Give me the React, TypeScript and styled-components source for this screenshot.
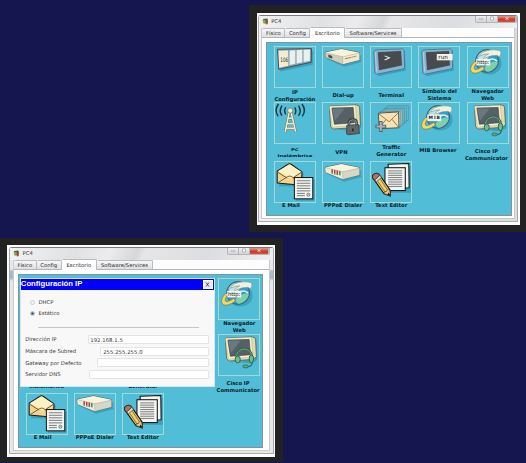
import React from "react";
import styled, { createGlobalStyle } from "styled-components";

const Global = createGlobalStyle`
  html, body { margin: 0; padding: 0; background: #15154f; }
  body { width: 526px; height: 463px; overflow: hidden; }
  * { box-sizing: border-box; }
`;

const Page = styled.main`
  width: 526px;
  height: 463px;
  padding-top: 5px;
  display: flex;
  flex-direction: column;
  gap: 5.7px;
  background: #15154f;
  font-family: "DejaVu Sans", sans-serif;
  font-size: 5.25px;
  color: #2b2b2b;
`;

const Frame = styled.section<{ $w: number; $h: number; $end?: boolean; $pad: string }>`
  align-self: ${(p) => (p.$end ? "flex-end" : "flex-start")};
  width: ${(p) => p.$w}px;
  height: ${(p) => p.$h}px;
  padding: ${(p) => p.$pad};
  background: #222;
  flex: none;
`;

const Card = styled.div`
  height: 100%;
  background: #fff;
  padding: 2px 1.6px 2.6px 1.4px;
`;

const Chrome = styled.div<{ $rail: number }>`
  height: 100%;
  border: 1px solid #a9aaac;
  border-top-color: #77797c;
  border-radius: 3px 3px 1px 1px;
  padding: 0 ${(p) => p.$rail}px 2.6px;
  background: ${(p) =>
    p.$rail > 2
      ? "linear-gradient(#e9e9eb 21px, #a9bccf 23px, #a3b7cc 30px, #e6e7e9 33px)"
      : "linear-gradient(90deg, #f1f1f3, #dcdde0)"};
  display: flex;
  flex-direction: column;
`;

const TitleBar = styled.header<{ $pull: number }>`
  height: 12.3px;
  flex: none;
  margin: 0 ${(p) => -p.$pull}px;
  padding-left: ${(p) => p.$pull + 0.6}px;
  display: flex;
  align-items: flex-start;
  background: linear-gradient(115deg, #f2f2f3 0%, #e0e1e3 25%, #ececee 38%, #d6d7d9 48%, #e6e6e8 51%, #dcdde0 75%, #efeff1 100%);
`;

const TitleText = styled.span`
  margin: 2.4px auto 0 2.2px;
  line-height: 7px;
  color: #333;
`;

const AppIcon = styled.svg`
  width: 7px;
  height: 7px;
  margin-top: 2px;
`;

const Controls = styled.div<{ $edge: number }>`
  display: flex;
  margin-right: ${(p) => p.$edge}px;
  height: 7.3px;
  border: 0.5px solid #b4b6b9;
  border-top: 0;
  border-radius: 0 0 2px 2px;
  overflow: hidden;
`;

const Control = styled.span<{ $close?: boolean }>`
  width: ${(p) => (p.$close ? 18.4 : 11)}px;
  display: flex;
  align-items: center;
  justify-content: center;
  border-right: 0.5px solid #b4b6b9;
  background: ${(p) =>
    p.$close ? "linear-gradient(#e39a8a, #cf5440 45%, #c43522 50%, #d8553d)" : "linear-gradient(#f0f0f2, #d3d4d7)"};
  svg { width: 6px; height: 5px; display: block; }
`;

const Body = styled.div<{ $l: number }>`
  flex: 1;
  min-height: 0;
  background: #fff;
  border: 0.5px solid #c9cacc;
  border-top: 0;
  padding-left: ${(p) => p.$l}px;
`;

const Tabs = styled.nav<{ $pull: number }>`
  display: flex;
  height: 9.7px;
  margin-left: -${(p) => p.$pull}px;
  align-items: flex-end;
  border-bottom: 0.7px solid #b5b6b8;
  background: #fdfdfd;
`;

const Tab = styled.span<{ $w: number; $active?: boolean }>`
  width: ${(p) => p.$w}px;
  height: ${(p) => (p.$active ? 10.7 : 9)}px;
  margin-bottom: ${(p) => (p.$active ? -1 : 0)}px;
  flex: none;
  display: flex;
  align-items: center;
  justify-content: center;
  white-space: nowrap;
  background: ${(p) => (p.$active ? "#fff" : "linear-gradient(#f7f7f8, #dedfe1)")};
  border: 1px solid #bbbcbe;
  border-width: 1px 1px 0 0;
  border-radius: 1.5px 1.5px 0 0;
`;

const Desk = styled.div`
  position: relative;
  width: 245.4px;
  height: 174.4px;
  margin-top: 4.3px;
  padding: 3px 0 0 6.6px;
  border: 1px solid #82949a;
  background: #52bdd6;
`;

const Grid = styled.div`
  display: grid;
  grid-template-columns: repeat(5, 48.2px);
  grid-template-rows: 56px 58.9px 48px;
`;

const Item = styled.div`
  display: flex;
  flex-direction: column;
  width: 42px;
`;

const Tile = styled.svg`
  width: 42px;
  height: 42px;
  flex: none;
  overflow: visible;
  border: 1px solid #a3d9d5;
  display: block;
`;

const Label = styled.div<{ $top: number; $shift?: number; $squat?: boolean }>`
  align-self: center;
  margin-top: ${(p) => p.$top}px;
  margin-left: ${(p) => (p.$shift ?? 0) * 2}px;
  width: 60px;
  flex: none;
  text-align: center;
  font-weight: 700;
  line-height: ${(p) => (p.$squat ? 5.2 : 6.8)}px;
  white-space: nowrap;
  color: #07222a;
  span { display: block; ${(p) => p.$squat && "transform: scaleY(0.7);"} }
`;

const Dialog = styled.div`
  position: absolute;
  left: 0.9px;
  top: 3px;
  width: 195px;
  height: 108.8px;
  background: #f8f8f8;
  border: 0.5px solid #d9e5e8;
  color: #3a3a3a;
  font-size: 5.3px;
`;

const DialogTitle = styled.div`
  height: 10.8px;
  background: #0000fc;
  color: #fff;
  font: 700 7.7px/10.6px "Liberation Sans", Arial, sans-serif;
  padding: 0 1px 0 0;
  display: flex;
  justify-content: space-between;
  align-items: center;
`;

const CloseBox = styled.span`
  width: 10px;
  height: 9px;
  background: #e9e9e9;
  border: 0.5px solid #fff;
  display: flex;
  align-items: center;
  justify-content: center;
  svg { width: 5px; height: 5px; }
`;

const Radio = styled.div`
  display: flex;
  align-items: center;
  gap: 3.2px;
  height: 11px;
  padding-left: 9.4px;
  svg { width: 5px; height: 5px; }
`;

const Radios = styled.div`
  padding-top: 7.3px;
`;

const Rule = styled.div`
  margin: 7.6px 0 0 17px;
  width: 161px;
  height: 1px;
  background: #c6c6c6;
`;

const Fields = styled.div`
  padding: 6px 5.2px 0 4.4px;
`;

const Field = styled.div`
  display: flex;
  align-items: center;
  justify-content: space-between;
  height: 11.7px;
`;

const Input = styled.span<{ $w: number; $indent: number }>`
  width: ${(p) => p.$w}px;
  height: 9px;
  padding-left: ${(p) => p.$indent}px;
  line-height: 8.2px;
  background: #fff;
  border: 0.5px solid #e4e4e4;
  border-radius: 1px;
  letter-spacing: 0.05px;
`;

const K = "#46565c";
const CREAM = "#eee9cf";

const Shadow = ({ d }: { d: string }) => <path d={d} fill="#2788aa" opacity=".55" transform="translate(5 6)" />;

const Globe = ({ text, mib }: { text: string; mib?: boolean }) => (
  <>
    <ellipse cx="66" cy="52" rx="40" ry="35" fill="#2788aa" opacity=".5" />
    <circle cx="60" cy="44" r="36" fill="#2b9fd0" stroke={K} strokeWidth="3" />
    <path d="M30 30c8-19 34-24 51-14-6 12-18 12-21 24-9 11-27 5-30-10z" fill="#b6e6ec" />
    <path d="M54 62c12-12 28-21 40-14-2 13-14 26-30 30-11-3-14-10-10-16z" fill="#7fd0a8" />
    <path d="M64 44c10-11 19-6 28 0" fill="none" stroke="#dff6ee" strokeWidth="5" />
    <path d="M22 45C2 62 4 86 26 82c10-2 18-7 26-13l-5-8c-14 9-24 13-27 8-1-5 2-13 8-20z" fill="#f3d95f" stroke="#7c7243" strokeWidth="2.2" />
    <path d="M32 30C45 11 75 5 99 11c6 2 7 15-2 20-2-5-7-5-12-4-14 0-27 5-38 12 4-9 11-14 18-17-11-1-22 4-33 8z" fill="#f0f2de" stroke="#84958b" strokeWidth="2.2" />
    <rect x="26" y={mib ? 36 : 37} width="44" height="21" fill="#f4f4ef" />
    <text x="48" y={mib ? 51 : 53} textAnchor="middle" fontSize={mib ? 14 : 17} fontWeight={mib ? 700 : 400} textLength={mib ? 36 : 39} fill="#222">{text}</text>
  </>
);

const Terminal = ({ run }: { run?: boolean }) => (
  <>
    <Shadow d="M10 10L101 6l4 62-87 18z" />
    <path d="M9 13l6-4 84-3 5 4 2 55-5 4-84 17-5-4z" fill="#86b4d2" stroke="#3f6480" strokeWidth="2.2" />
    <path d="M20 15l76-4 3 48-75 16z" fill="#474b50" stroke="#9fc0cf" strokeWidth="2" />
    <path d="M13 16l5 62" stroke="#b9d6e6" strokeWidth="2.5" />
    {run ? (
      <>
        <rect x="56" y="22" width="50" height="20" fill="#f2f2eb" />
        <text x="76" y="38" textAnchor="middle" fontSize="18" fill="#111">run</text>
      </>
    ) : (
      <path d="M43 28l15 6-15 7" fill="none" stroke="#f5f5f5" strokeWidth="3.2" />
    )}
  </>
);

const Modem = ({ leds }: { leds?: boolean }) => (
  <>
    <Shadow d="M7 18L58 7l57 13v22L62 56 8 32z" />
    <path d="M7 17L58 6l57 12v23L62 54 8 32z" fill={CREAM} stroke="#555b51" strokeWidth="2.8" strokeLinejoin="round" />
    <path d="M7 17L58 6l57 12-53 13z" fill="#f8f3dc" />
    <path d="M62 31l53-12v22L62 54z" fill={leds ? "#d8d7c5" : "#f1e9cd"} />
    <path d="M7 18l55 13v23L8 32z" fill={leds ? "#eeeadb" : "#d1cdb8"} />
    <path d="M8 18l54 13 53-12M62 31v23" fill="none" stroke="#a9a592" strokeWidth="1.5" />
    {leds ? (
      <g strokeWidth="5">
        <path d="M29 23v11m8-9v11m8-9v11" stroke="#c53c40" />
        <path d="M29 34v3m8-1v3m8-1v3m8-13v14" stroke="#369858" />
      </g>
    ) : (
      <>
        <path d="M17 24l12 4v9l-12-5z" fill="#464c4b" />
        <path d="M69 37l20-4" stroke="#c66d45" strokeWidth="3" />
        <path d="M90 32l15-3" stroke="#9b9786" strokeWidth="3" />
      </>
    )}
  </>
);

const Monitor = () => (
  <>
    <Shadow d="M21 12l91-5 4 65-18 12-70-8z" />
    <path d="M20 10l86-4 9 5 3 58-12 8-74 5-8-7z" fill="#e2daac" stroke="#5c6257" strokeWidth="2.6" strokeLinejoin="round" />
    <path d="M20 10l82-3 5 62-77 7z" fill="#f4efcc" stroke="#a3a182" strokeWidth="1.2" />
    <path d="M28 16l67-2 4 48-63 5z" fill="#566067" stroke="#3b4347" strokeWidth="2" />
    <path d="M29 18l39-1-30 39z" fill="#6b7880" />
  </>
);

const Paper = ({ x, y, w, h }: { x: number; y: number; w: number; h: number }) => (
  <>
    <rect x={x} y={y} width={w} height={h} fill="#f4f4f1" stroke="#111" strokeWidth="3.2" />
    <path
      d={Array.from({ length: 8 }, (_, i) => `M${x + 10} ${y + 10 + i * 7}h${w - 20}`).join("")}
      stroke="#5b5f60"
      strokeWidth="2.5"
    />
  </>
);

const icons: Record<string, React.ReactNode> = {
  ip: (
    <>
      <Shadow d="M8 7l107 1-1 42-102 21z" />
      <path d="M8 7L115 5l-1 43-102 22z" fill="#8fa3aa" stroke="#43494c" strokeWidth="3" strokeLinejoin="round" />
      <path d="M11 12l30-1 1 48-29 6z" fill="#f2edd1" />
      <path d="M46 11l18-1v43l-18 4zM68 10l18-1v39l-18 4zM90 9l20-1v35l-20 4z" fill="#e9f1ee" />
      <text x="29" y="46" textAnchor="middle" fontSize="19" textLength="25" lengthAdjust="spacingAndGlyphs" fill="#273033">106</text>
    </>
  ),
  dial: <Modem />,
  term: <Terminal />,
  run: <Terminal run />,
  web: <Globe text="http:" />,
  tower: (
    <>
      <path d="M34 14q-7 11 0 22M22 8q-11 17 0 32M11 3Q-4 23 10 42M62 14q7 11 0 22M74 8q11 17 0 32M85 3q15 20 1 39" fill="none" stroke="#183840" strokeWidth="4.5" />
      <path d="M45 29L32 91m19-62l14 62M42 48h13M38 65h22M35 80h28" fill="none" stroke="#5f6a60" strokeWidth="8" />
      <path d="M45 29L32 91m19-62l14 62M42 48h13M38 65h22M35 80h28" fill="none" stroke="#f2e9c4" strokeWidth="5" />
      <circle cx="48" cy="24" r="8" fill="#f7edb8" stroke="#66705c" strokeWidth="2" />
    </>
  ),
  vpn: (
    <>
      <Monitor />
      <path d="M82 73V62q0-10 12-10t12 10v11" fill="none" stroke="#343a3e" strokeWidth="8" />
      <path d="M82 73V62q0-9 12-9t12 9v11" fill="none" stroke="#9da2a4" strokeWidth="3" />
      <path d="M75 70l37-2 3 28-36 4-5-3z" fill="#636669" stroke="#3c3e42" strokeWidth="2.5" />
      <path d="M94 80v9" stroke="#171a1e" strokeWidth="4" />
    </>
  ),
  traffic: (
    <>
      {[5, 4, 3, 2, 1].map((i) => (
        <path key={i} d={`M${23 + i * 6} ${32 - i * 4.8}h65v47h-65z`} fill={i < 3 ? "#b5cdbf" : "#74bccb"} opacity={1 - i * 0.1} stroke="#3b7c92" strokeWidth="2.2" />
      ))}
      <path d="M23 32l64-4 1 50-62 3z" fill="#f9e1b0" stroke="#3e4847" strokeWidth="2.8" />
      <path d="M24 34l33 25 30-29M26 80l21-28m40 25L66 51" fill="none" stroke="#7a6c4b" strokeWidth="2.6" />
      <path d="M31 57v34M14 74h34" stroke="#536068" strokeWidth="11" />
      <path d="M31 60v28M17 74h28" stroke="#aab4b5" strokeWidth="6" />
    </>
  ),
  mib: <Globe text="MIB" mib />,
  phone: (
    <>
      <Monitor />
      <path d="M55 72c-2-39 48-40 50-2" fill="none" stroke="#29674b" strokeWidth="6" />
      <path d="M55 70c0-32 45-36 49-2" fill="none" stroke="#81bf86" strokeWidth="2.5" />
      <ellipse cx="59" cy="77" rx="8" ry="11" fill="#78b98c" stroke="#29674b" strokeWidth="3" />
      <ellipse cx="102" cy="75" rx="7" ry="12" fill="#78b98c" stroke="#29674b" strokeWidth="3" />
      <path d="M105 86q0 14-18 14" fill="none" stroke="#29674b" strokeWidth="3.5" />
      <ellipse cx="84" cy="99" rx="9" ry="4.5" fill="#65a778" stroke="#29674b" strokeWidth="2.5" />
    </>
  ),
  mail: (
    <>
      <Shadow d="M7 29L46 6l39 25v41L8 70z" />
      <path d="M7 29L40 8q6-5 12 0l33 23-2 42-76-7z" fill="#f7d48b" stroke="#17191a" strokeWidth="3.2" strokeLinejoin="round" />
      <path d="M9 29L43 9q3-2 7 1l32 21-34 21z" fill="#fff0c5" />
      <path d="M8 32l29 18M8 66l32-20q8-4 14 1l29 25M84 32L58 49" fill="none" stroke="#59492a" strokeWidth="2.6" />
      <Shadow d="M61 49h59v67H61z" />
      <rect x="61" y="49" width="58" height="67" fill="#f4f4f1" stroke="#151515" strokeWidth="3.2" />
      <path d="M69 59h42M69 67h42M69 75h42M69 83h42M69 91h42M69 99h25M69 106h25" stroke="#5b5f60" strokeWidth="2.5" />
      <circle cx="105" cy="103" r="5" fill="#ccc" stroke="#555" strokeWidth="2" />
    </>
  ),
  pppoe: <Modem leds />,
  edit: (
    <>
      <Shadow d="M44 7h76v84H48z" />
      <path d="M54 7l65-2 1 76-63 2z" fill="#f4f4f1" stroke="#111" strokeWidth="3.2" />
      <Paper x={44} y={18} w={64} h={72} />
      <path d="M5 49q-2-10 10-13 8-2 12 5l33 47 1 19-20-7z" fill="#efcf6c" stroke="#111" strokeWidth="3.5" strokeLinejoin="round" />
      <path d="M5 49q-2-10 10-13 8-2 12 5l-15 17z" fill="#b2705c" stroke="#222" strokeWidth="2" />
      <path d="M12 57l16-15 5 7-16 14z" fill="#d9d8c9" stroke="#333" strokeWidth="2" />
      <path d="M22 62l23 34M30 55l23 34" stroke="#63552d" strokeWidth="2.5" />
      <path d="M41 99q0-8 8-6 0-9 10-5l2 19z" fill="#f5bd8b" stroke="#443d2e" strokeWidth="2" />
      <path d="M51 103l5-6 6 10z" fill="#111" />
    </>
  ),
};

interface App {
  icon: string;
  lines: string[];
  top: number;
  shift?: number;
  squat?: boolean;
}

const apps: App[] = [
  { icon: "ip", lines: ["IP", "Configuración"], top: 0.9 },
  { icon: "dial", lines: ["Dial-up"], top: 3.6 },
  { icon: "term", lines: ["Terminal"], top: 3.6 },
  { icon: "run", lines: ["Símbolo del", "Sistema"], top: 0 },
  { icon: "web", lines: ["Navegador", "Web"], top: 0 },
  { icon: "tower", lines: ["PC", "Inalámbrica"], top: 3.4, squat: true },
  { icon: "vpn", lines: ["VPN"], top: 5.4, shift: -1.7 },
  { icon: "traffic", lines: ["Traffic", "Generator"], top: 0 },
  { icon: "mib", lines: ["MIB Browser"], top: 3.4, shift: -1.5 },
  { icon: "phone", lines: ["Cisco IP", "Communicator"], top: 3.9, shift: -1.2 },
  { icon: "mail", lines: ["E Mail"], top: -1, shift: -4 },
  { icon: "pppoe", lines: ["PPPoE Dialer"], top: -1 },
  { icon: "edit", lines: ["Text Editor"], top: -1 },
];

const Desktop = ({ children }: { children?: React.ReactNode }) => (
  <Desk>
    <Grid>
      {apps.map((a) => (
        <Item key={a.icon}>
          <Tile viewBox="0 0 126 126">{icons[a.icon]}</Tile>
          <Label $top={a.top} $shift={a.shift} $squat={a.squat}>
            {a.lines.map((l) => (
              <span key={l}>{l}</span>
            ))}
          </Label>
        </Item>
      ))}
    </Grid>
    {children}
  </Desk>
);

const PcWindow = ({ rail, left, edge, children }: { rail: number; left: number; edge: number; children: React.ReactNode }) => (
  <Card>
    <Chrome $rail={rail}>
      <TitleBar $pull={rail}>
        <AppIcon viewBox="0 0 14 14">
          <path d="M2 2l9-1 1 8-8 2z" fill="#355b52" />
          <path d="M1 5l6-2 1 6-5 2z" fill="#93a742" />
          <path d="M6 8l4-2 2 6-4 1z" fill="#b6542c" />
        </AppIcon>
        <TitleText>PC4</TitleText>
        <Controls $edge={edge}>
          <Control>
            <svg viewBox="0 0 12 10"><path d="M2 5h8v2H2z" fill="#fff" stroke="#a0a2a5" /></svg>
          </Control>
          <Control>
            <svg viewBox="0 0 12 10"><path d="M3 2h6v6H3z" fill="#fff" stroke="#a0a2a5" strokeWidth="1.5" /></svg>
          </Control>
          <Control $close>
            <svg viewBox="0 0 12 10"><path d="M3 2l6 6m0-6L3 8" stroke="#f3d8d2" strokeWidth="2" /></svg>
          </Control>
        </Controls>
      </TitleBar>
      <Body $l={left}>
        <Tabs $pull={left}>
          <Tab $w={23}>Físico</Tab>
          <Tab $w={25}>Config</Tab>
          <Tab $w={35} $active>Escritorio</Tab>
          <Tab $w={56.4}>Software/Services</Tab>
        </Tabs>
        {children}
      </Body>
    </Chrome>
  </Card>
);

const IpDialog = () => (
  <Dialog>
    <DialogTitle>
      Configuración IP
      <CloseBox>
        <svg viewBox="0 0 10 10"><path d="M2 1l6 8M8 1L2 9" stroke="#222" strokeWidth="1.5" /></svg>
      </CloseBox>
    </DialogTitle>
    <Radios>
      <Radio>
        <svg viewBox="0 0 10 10"><circle cx="5" cy="5" r="4" fill="#f4f4f4" stroke="#aaa" /></svg>
        DHCP
      </Radio>
      <Radio>
        <svg viewBox="0 0 10 10"><circle cx="5" cy="5" r="4" fill="#dce7ec" stroke="#8498a2" /><circle cx="5" cy="5" r="2.5" fill="#245b7b" /></svg>
        Estático
      </Radio>
    </Radios>
    <Rule />
    <Fields>
      <Field>Dirección IP<Input $w={121} $indent={1.6}>192.168.1.5</Input></Field>
      <Field>Máscara de Subred<Input $w={108.5} $indent={2}>255.255.255.0</Input></Field>
      <Field>Gateway por Defecto<Input $w={112} $indent={2} /></Field>
      <Field>Servidor DNS<Input $w={119.6} $indent={2} /></Field>
    </Fields>
  </Dialog>
);

export default function App() {
  return (
    <>
      <Global />
      <Page>
        <Frame $w={277} $h={227.3} $end $pad="7.8px 6px 7.5px 8px">
          <PcWindow rail={2} left={3.9} edge={0}>
            <Desktop />
          </PcWindow>
        </Frame>
        <Frame $w={283.4} $h={224} $pad="6.6px 8px 5px 7.4px">
          <PcWindow rail={3} left={4.2} edge={3}>
            <Desktop>
              <IpDialog />
            </Desktop>
          </PcWindow>
        </Frame>
      </Page>
    </>
  );
}
